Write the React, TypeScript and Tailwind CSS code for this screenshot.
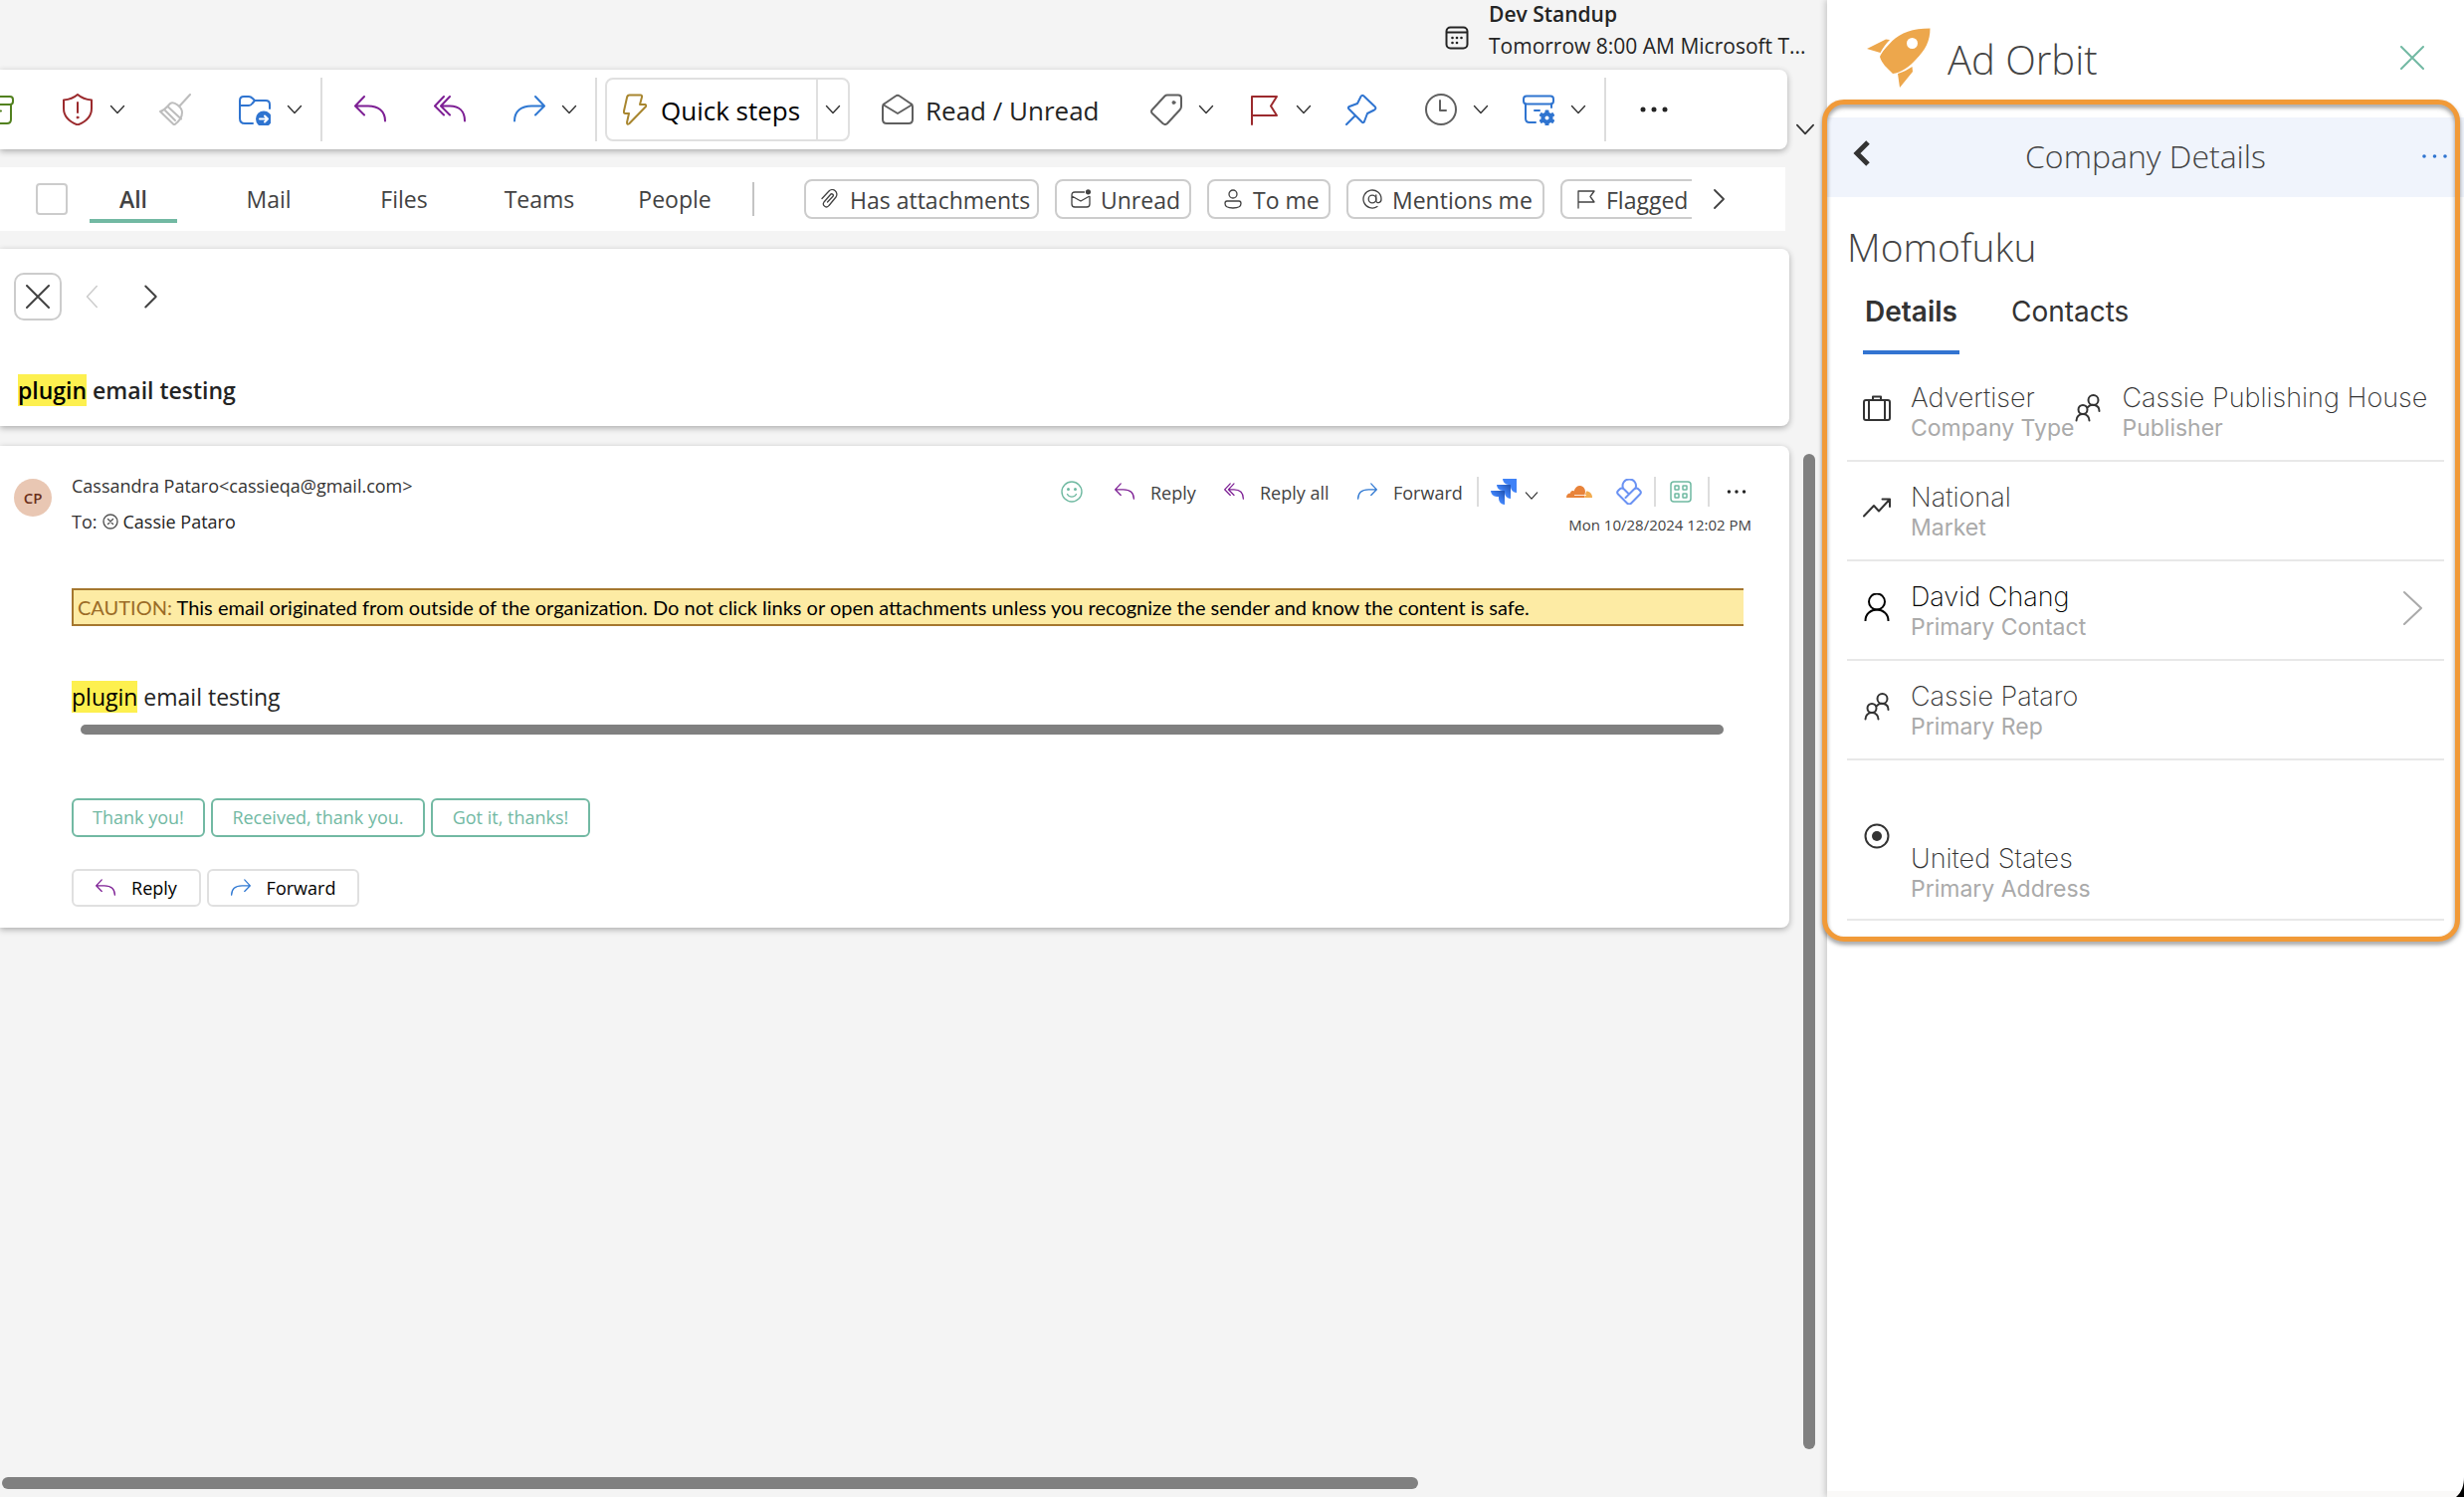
import { useState } from "react";
import type { ReactNode } from "react";
import clsx from "clsx";

type IconProps = { className?: string };

function Stroke({
  className,
  box = "0 0 32 32",
  width = 2,
  children,
}: {
  className?: string;
  box?: string;
  width?: number;
  children: ReactNode;
}) {
  return (
    <svg
      viewBox={box}
      className={clsx("shrink-0", className)}
      fill="none"
      stroke="currentColor"
      strokeWidth={width}
      strokeLinecap="round"
      strokeLinejoin="round"
      aria-hidden="true"
    >
      {children}
    </svg>
  );
}

const ChevronDown = ({ className = "h-4 w-4 text-[#333333]" }: IconProps) => (
  <Stroke className={className} box="0 0 16 16" width={1.4}>
    <path d="M1.500 4.500 8 11.500l6.500-7" />
  </Stroke>
);

const ReplyIcon = ({ className }: IconProps) => (
  <Stroke className={clsx("text-[#7d1f94]", className)}>
    <path d="M10 3 1 12.500l9 9M1.500 12.500H14c10 0 17 5 17 15" />
  </Stroke>
);

const ReplyAllIcon = ({ className }: IconProps) => (
  <Stroke className={clsx("text-[#7d1f94]", className)}>
    <path d="M10 3 1 12.500l9 9M16 3l-9 9.500 9 9M7.500 12.500H16c9 0 15 5 15 15" />
  </Stroke>
);

const ForwardIcon = ({ className }: IconProps) => (
  <Stroke className={clsx("text-[#2f78d2]", className)}>
    <path d="m22 3 9 9.500-9 9M30.500 12.500H18C8 12.500 1 17.500 1 27.500" />
  </Stroke>
);

const ArchiveIcon = () => (
  <Stroke className="h-8 w-8 text-[#52811f]">
    <rect x="1" y="3" width="30" height="8" rx="3" />
    <path d="M3 11v15q0 4 4 4h18q4 0 4-4V11M13 17.500h6" />
  </Stroke>
);

const ShieldIcon = () => (
  <Stroke className="h-8 w-8 text-[#9b2a2d]">
    <path d="M16 1c4 3.500 8.500 5 14 5.500V15c0 8-5 13-14 16.500C7 28 2 23 2 15V6.500C7.500 6 12 4.500 16 1Z" />
    <path d="M16 9v10" />
    <circle cx="16" cy="24" r="1" fill="currentColor" strokeWidth="1" />
  </Stroke>
);

const BroomIcon = () => (
  <Stroke className="h-8 w-8 text-[#bdbdbd]">
    <path d="m31 1-11 12M11 10c4-3 12 4 12 9 0 5-3 9-8 12.500L1 18c4-1 7-4.500 10-8Z" />
    <path d="m9 13.500 13 12M6 17l10 10" />
  </Stroke>
);

const MoveFolderIcon = () => (
  <Stroke className="h-8 w-8 text-[#2f74d0]">
    <path d="M14 30H6q-5 0-5-5V7q0-4 4-4h5q2 0 4 2l2 2h11q4 0 4 4v4M1 12h9q2 0 3.500-2L16 7" />
    <circle cx="25" cy="25.500" r="8" fill="currentColor" stroke="none" />
    <path d="M21 25.500h8m-3-3 3 3-3 3" stroke="#fff" />
  </Stroke>
);

const BoltIcon = () => (
  <Stroke className="h-8 w-6 text-[#a8862f]" box="0 0 24 32">
    <path d="M6.500 1.500h11q2 0 1.500 2L17 11h5.500q1.500 1 0 2.500L6.500 30q-2.500 2-2.500-1l2-9H2.500Q.5 20 1 17.500L4 4q.5-2.500 2.500-2.500Z" />
  </Stroke>
);

const MailReadIcon = () => (
  <Stroke className="h-8 w-8 text-[#5f5f5f]">
    <path d="M1 13q0-2 2-3L14 2.500q2-1.500 4 0L29 10q2 1 2 3v13q0 4-4 4H5q-4 0-4-4Z" />
    <path d="m2 11.500 14 8.500 14-8.500" />
  </Stroke>
);

const TagIcon = () => (
  <Stroke className="h-8 w-8 text-[#5f5f5f]">
    <path d="M17 1.500h11q3 0 3 3V13q0 2-1.500 3.500L17 30q-2 2-4.500 0L2 20q-2-2 0-4L14.500 2.500q1-1 2.500-1Z" />
    <circle cx="23.500" cy="9" r="1.500" fill="currentColor" strokeWidth="1" />
  </Stroke>
);

const FlagIcon = () => (
  <Stroke className="h-8 w-8 text-[#9b2a2d]">
    <path d="M4 31V3h25l-6 9.500 6 9.500H4" />
  </Stroke>
);

const PinIcon = () => (
  <Stroke className="h-8 w-8 text-[#2f74d0]">
    <path d="m1 31 8-8M18.500 2.500 29.500 13q2 2-.5 3.500l-7 3.500-3 8q-1 2-2.500.5L3.500 15.500q-1.500-1.500.5-2.500l8-3L15.500 3q1-2 3-.5Z" />
  </Stroke>
);

const ClockIcon = () => (
  <Stroke className="h-8 w-8 text-[#5f5f5f]">
    <circle cx="16" cy="16" r="15" />
    <path d="M15 7v10h6" />
  </Stroke>
);

const ArchiveGearIcon = () => (
  <Stroke className="h-8 w-8 text-[#2f74d0]">
    <rect x="1" y="2.500" width="30" height="8" rx="3" />
    <path d="M3 10.500V25q0 4 4 4h6M29 10.500V14M12 17h5" />
    <g fill="currentColor" stroke="none">
      <circle cx="24.500" cy="24.500" r="6" />
      <rect x="22.500" y="16.500" width="4" height="16" rx="1" />
      <rect x="22.500" y="16.500" width="4" height="16" rx="1" transform="rotate(60 24.500 24.500)" />
      <rect x="22.500" y="16.500" width="4" height="16" rx="1" transform="rotate(120 24.500 24.500)" />
    </g>
    <circle cx="24.500" cy="24.500" r="2" fill="#fff" stroke="none" />
  </Stroke>
);

const MoreIcon = ({ className }: IconProps) => (
  <svg viewBox="0 0 32 32" className={clsx("shrink-0", className)} fill="currentColor" aria-hidden="true">
    <circle cx="5" cy="16" r="2.500" />
    <circle cx="16" cy="16" r="2.500" />
    <circle cx="27" cy="16" r="2.500" />
  </svg>
);

const ClipIcon = () => (
  <Stroke className="h-5 w-5" box="0 0 20 20" width={1.3}>
    <path d="m2 9.500 6.500-7a4.500 4.500 0 0 1 7.500 5.500l-7 8.500a3 3 0 0 1-5-3.500l6.500-7.500a1.500 1.500 0 0 1 2.500 1.800L7.500 13" />
  </Stroke>
);

const UnreadIcon = () => (
  <Stroke className="h-5 w-5" box="0 0 20 20" width={1.3}>
    <path d="M13.500 3H4Q1 3 1 6v9q0 3 3 3h12q3 0 3-3V7.500M1 7l9 5 8-4.500" />
    <circle cx="17.500" cy="2.800" r="2.600" fill="currentColor" stroke="none" />
  </Stroke>
);

const ToMeIcon = () => (
  <Stroke className="h-5 w-5" box="0 0 20 20" width={1.3}>
    <circle cx="10" cy="5" r="4" />
    <path d="M4 12h12q2 0 2 2.500 0 4.500-8 4.500t-8-4.500Q2 12 4 12Z" />
  </Stroke>
);

const MentionIcon = () => (
  <Stroke className="h-5 w-5" box="0 0 20 20" width={1.3}>
    <circle cx="10" cy="10" r="3.800" />
    <path d="M13.800 6v5.500c0 3 5.200 3 5.200-1.500a9 9 0 1 0-4 7.500" />
  </Stroke>
);

const SmallFlagIcon = () => (
  <Stroke className="h-5 w-5" box="0 0 20 20" width={1.3}>
    <path d="M2 19V2h16l-4 5.500 4 5.500H2" />
  </Stroke>
);

const CalendarIcon = () => (
  <Stroke className="h-6 w-6 text-[#242424]" box="0 0 24 24">
    <rect x="1.500" y="1.500" width="21" height="21" rx="4" />
    <path d="M2 6.500h20" />
    <g fill="currentColor" stroke="none">
      <circle cx="7.500" cy="12" r="1.300" />
      <circle cx="12" cy="12" r="1.300" />
      <circle cx="16.500" cy="12" r="1.300" />
      <circle cx="7.500" cy="17" r="1.300" />
      <circle cx="12" cy="17" r="1.300" />
    </g>
  </Stroke>
);

const SmileyIcon = () => (
  <Stroke className="h-[22px] w-[22px] text-[#6fb9a1]" box="0 0 22 22" width={1.4}>
    <circle cx="11" cy="11" r="10" />
    <path d="M6.500 13.500c2 3.500 7 3.500 9 0" />
    <circle cx="7.500" cy="8.500" r=".8" fill="currentColor" />
    <circle cx="14.500" cy="8.500" r=".8" fill="currentColor" />
  </Stroke>
);

const JiraIcon = () => (
  <svg viewBox="0 0 26 26" className="h-[26px] w-[26px] shrink-0" aria-hidden="true">
    <defs>
      <linearGradient id="jiraFold" x1="1" y1="0" x2="0.3" y2="0.8">
        <stop offset="0.1" stopColor="#2458b8" />
        <stop offset="0.7" stopColor="#3f82f7" />
      </linearGradient>
    </defs>
    <path d="M12 0h14v14a6 6 0 0 1-6-6V6h-2a6 6 0 0 1-6-6Z" fill="#3f82f7" />
    <path d="M6 6h14v14a6 6 0 0 1-6-6v-2h-2a6 6 0 0 1-6-6Z" fill="url(#jiraFold)" />
    <path d="M0 12h14v14a6 6 0 0 1-6-6v-2H6a6 6 0 0 1-6-6Z" fill="url(#jiraFold)" />
  </svg>
);

const CloudIcon = () => (
  <svg viewBox="0 0 26 14" className="h-[14px] w-[26px] shrink-0" aria-hidden="true">
    <path d="M0 13c0-3 1.500-4.500 4-4.500 0-2 2-3 3.500-2C9 2 12 .5 14 1c3 .5 5 3 5 6l-1 6Z" fill="#e8833a" />
    <path d="M18 13 20 6.500c3.500 0 6 2.500 6 6.500Z" fill="#f2ac50" />
    <path d="M8 10.500h12" stroke="#fff" strokeWidth="0.8" />
  </svg>
);

const LoopIcon = () => (
  <Stroke className="h-[26px] w-[26px] text-[#6a92f3]" box="0 0 26 26">
    <path d="M7 9.500A6.700 6.700 0 1 1 19.500 9.500" />
    <path d="M13 15.500 8 10.500a3 3 0 0 0-4.500 0L2 12a2.500 2.500 0 0 0 0 3.500l9 9a3 3 0 0 0 4.200 0l8.800-9a2.500 2.500 0 0 0 0-3.500l-1.500-1.500a3 3 0 0 0-4.500 0l-8.500 8.500" />
  </Stroke>
);

const AppsIcon = () => (
  <Stroke className="h-[22px] w-[22px] text-[#6fb9a1]" box="0 0 22 22" width={1.500}>
    <rect x="1" y="1" width="20" height="20" rx="3" />
    <rect x="5" y="5" width="4" height="4" rx=".5" />
    <rect x="13" y="5" width="4" height="4" rx=".5" />
    <rect x="5" y="13" width="4" height="4" rx=".5" />
    <rect x="13" y="13" width="4" height="4" rx=".5" />
  </Stroke>
);

const BlockedIcon = () => (
  <Stroke className="h-4 w-4 text-[#555555]" box="0 0 16 16" width={1.400}>
    <circle cx="8" cy="8" r="7" />
    <path d="m5.500 5.500 5 5m0-5-5 5" />
  </Stroke>
);

const CloseIcon = ({ className }: IconProps) => (
  <Stroke className={className} box="0 0 24 24">
    <path d="m1 1 22 22M23 1 1 23" />
  </Stroke>
);

const RocketIcon = () => (
  <svg viewBox="0 0 64 60" className="h-[60px] w-16 shrink-0" fill="#eda74c" aria-hidden="true">
    <path
      fillRule="evenodd"
      d="M63.500.5C46 .5 34 5 25.500 13 19 20 15 24 13 29c2 7 7 11 13 17 8-1 17-7 23-14C59 22 63.500 13 63.500.5ZM45.500 10a5.500 5.500 0 1 1 0 11 5.500 5.500 0 0 1 0-11Z"
    />
    <path d="M0 21 19 11.500l4 .5c-4 4-7 8-9.500 13Z" />
    <path d="M31 46c6-2 10-4 14.500-7l.5 5-13 16Z" />
  </svg>
);

const SuitcaseIcon = () => (
  <Stroke className="h-7 w-7" box="0 0 28 28">
    <rect x="1" y="6" width="26" height="20" rx="2" />
    <path d="M6 6v20M22 6v20M10 6V2.500h8V6" />
  </Stroke>
);

const TrendIcon = () => (
  <Stroke className="h-7 w-7" box="0 0 28 28">
    <path d="M1 22.500 11 12l5 5.500L27 5.500M19.500 5.500H27V13" />
  </Stroke>
);

const PersonIcon = () => (
  <Stroke className="h-7 w-7 text-black" box="0 0 28 28">
    <circle cx="14" cy="8.500" r="8" />
    <path d="M2.500 27.500C2.500 21 8 16.500 14 16.500S25.500 21 25.500 27.500" />
  </Stroke>
);

const PeopleIcon = () => (
  <Stroke className="h-7 w-7" box="0 0 28 28">
    <circle cx="19.500" cy="6" r="5" />
    <circle cx="9" cy="15.500" r="4.500" />
    <path d="M2.500 26.500c0-4 3-6.500 6.500-6.500s6.500 2.500 6.500 6.500M14 13c3-3.500 11.500-3 11.500 4" />
  </Stroke>
);

const TargetIcon = () => (
  <Stroke className="h-7 w-7" box="0 0 28 28">
    <circle cx="14" cy="14" r="11.500" />
    <circle cx="14" cy="14" r="5" fill="currentColor" stroke="none" />
  </Stroke>
);

function Tool({ label, menu, className, children }: { label: string; menu?: boolean; className: string; children: ReactNode }) {
  return (
    <button type="button" aria-label={label} className={clsx("flex shrink-0 items-center gap-4", className)}>
      {children}
      {menu && <ChevronDown />}
    </button>
  );
}

const Rule = ({ className }: IconProps) => <span className={clsx("w-0.5 shrink-0", className)} />;

function Toolbar() {
  return (
    <div className="flex items-end">
      <div className="flex h-20 min-w-0 flex-1 items-center rounded-r-lg bg-white shadow-[0_2px_6px_rgba(0,0,0,0.3)]">
        <Tool label="Archive" className="-ml-[18px]"><ArchiveIcon /></Tool>
        <Tool label="Report" menu className="ml-12"><ShieldIcon /></Tool>
        <Tool label="Sweep" className="ml-[34px]"><BroomIcon /></Tool>
        <Tool label="Move to" menu className="ml-12"><MoveFolderIcon /></Tool>
        <Rule className="ml-[18px] h-16 bg-[#dddddd]" />
        <Tool label="Reply" className="ml-8"><ReplyIcon className="h-8 w-8" /></Tool>
        <Tool label="Reply all" className="ml-12"><ReplyAllIcon className="h-8 w-8" /></Tool>
        <Tool label="Forward" menu className="ml-12"><ForwardIcon className="h-8 w-8" /></Tool>
        <Rule className="ml-[18px] h-16 bg-[#dddddd]" />
        <div className="ml-2 flex h-16 w-[246px] shrink-0 rounded-lg border-2 border-[#e0e0e0] text-black">
          <button type="button" className="flex flex-1 items-center gap-3.5 pl-4 text-[26px] leading-9 whitespace-nowrap">
            <BoltIcon />
            <span className="pt-0.5">Quick steps</span>
          </button>
          <button type="button" aria-label="Quick steps menu" className="flex w-8 items-center justify-center border-l-2 border-[#e0e0e0]">
            <ChevronDown />
          </button>
        </div>
        <button type="button" className="ml-8 flex w-[222px] shrink-0 items-center gap-3 text-[26px] leading-9 whitespace-nowrap text-[#242424]">
          <MailReadIcon />
          <span className="pt-0.5">Read / Unread</span>
        </button>
        <Tool label="Categorize" menu className="ml-12"><TagIcon /></Tool>
        <Tool label="Flag" menu className="ml-[34px]"><FlagIcon /></Tool>
        <Tool label="Pin" className="ml-[34px]"><PinIcon /></Tool>
        <Tool label="Snooze" menu className="ml-12"><ClockIcon /></Tool>
        <Tool label="Policy" menu className="ml-[34px]"><ArchiveGearIcon /></Tool>
        <Rule className="ml-[18px] h-16 bg-[#dddddd]" />
        <Tool label="More options" className="ml-8"><MoreIcon className="h-8 w-8 text-[#242424]" /></Tool>
      </div>
      <button type="button" aria-label="Ribbon options" className="flex w-10 shrink-0 pt-2 pb-2.5 pl-2">
        <ChevronDown className="h-5 w-5 text-[#333333]" />
      </button>
    </div>
  );
}

const TABS = ["All", "Mail", "Files", "Teams", "People"];

const PILLS = [
  { text: "Has attachments", icon: <ClipIcon />, width: "w-[236px]" },
  { text: "Unread", icon: <UnreadIcon />, width: "w-[137px]" },
  { text: "To me", icon: <ToMeIcon />, width: "w-[124px]" },
  { text: "Mentions me", icon: <MentionIcon />, width: "w-[199px]" },
  { text: "Flagged", icon: <SmallFlagIcon />, width: "w-[150px]" },
];

function FilterBar() {
  const [tab, setTab] = useState("All");

  return (
    <div className="mt-[18px] mr-[42px] flex h-16 items-center bg-white text-[23px] leading-8 text-[#424242]">
      <input
        type="checkbox"
        aria-label="Select all"
        className="ml-9 h-8 w-8 shrink-0 appearance-none rounded-sm border-2 border-[#cccccc] bg-white"
      />
      <div className="ml-[22px] flex shrink-0 gap-12">
        {TABS.map((t) => (
          <button
            key={t}
            type="button"
            onClick={() => setTab(t)}
            className={clsx(
              "flex h-12 w-[88px] items-center justify-center border-b-4 pt-1",
              t === tab ? "border-[#72b9a3] font-semibold" : "border-transparent",
            )}
          >
            {t}
          </button>
        ))}
      </div>
      <Rule className="ml-[34px] h-[34px] bg-[#c4c4c4]" />
      <div className="ml-[50px] flex w-[892px] gap-4 overflow-hidden">
        {PILLS.map((p) => (
          <button
            key={p.text}
            type="button"
            className={clsx(
              "flex h-10 shrink-0 items-center gap-2.5 rounded-lg border-2 border-[#cccccc] pl-3.5 whitespace-nowrap",
              p.width,
            )}
          >
            {p.icon}
            <span className="pt-0.5">{p.text}</span>
          </button>
        ))}
      </div>
      <button type="button" aria-label="More filters" className="ml-[18px] shrink-0">
        <Stroke className="h-5 w-5" box="0 0 20 20" width={1.800}>
          <path d="m5 1 9 9-9 9" />
        </Stroke>
      </button>
    </div>
  );
}

function SubjectCard() {
  return (
    <div className="mt-[18px] mr-[38px] h-[178px] rounded-r-lg bg-white pt-6 shadow-[0_2px_6px_rgba(0,0,0,0.3)]">
      <div className="flex items-center pl-3.5 text-[#424242]">
        <button type="button" aria-label="Close" className="flex h-12 w-12 items-center justify-center rounded-[10px] border-2 border-[#cccccc]">
          <CloseIcon className="h-6 w-6" />
        </button>
        <button type="button" aria-label="Previous" className="ml-[18px] text-[#cccccc]">
          <Stroke className="h-6 w-6">
            <path d="M23 2 10 16l13 14" />
          </Stroke>
        </button>
        <button type="button" aria-label="Next" className="ml-[34px]">
          <Stroke className="h-6 w-6" width={2.600}>
            <path d="m11 2 14 14-14 14" />
          </Stroke>
        </button>
      </div>
      <h1 className="mt-[54px] pl-[18px] text-[23px] leading-8 font-semibold text-[#242424]">
        <mark className="inline-block bg-[#fdf04f] text-black">plugin</mark> email testing
      </h1>
    </div>
  );
}

function MessageActions() {
  return (
    <div className="flex items-center text-[18px] leading-8 text-[#424242]">
      <button type="button" aria-label="React"><SmileyIcon /></button>
      <button type="button" className="ml-8 flex w-[84px] items-center gap-4">
        <ReplyIcon className="h-5 w-5" />
        <span className="pt-0.5">Reply</span>
      </button>
      <button type="button" className="ml-[26px] flex w-[108px] items-center gap-4 whitespace-nowrap">
        <ReplyAllIcon className="h-5 w-5" />
        <span className="pt-0.5">Reply all</span>
      </button>
      <button type="button" className="ml-[26px] flex w-[108px] items-center gap-4">
        <ForwardIcon className="h-5 w-5" />
        <span className="pt-0.5">Forward</span>
      </button>
      <Rule className="ml-3 h-[30px] bg-[#dddddd]" />
      <button type="button" aria-label="Jira" className="ml-3 flex items-center gap-2">
        <JiraIcon />
        <ChevronDown className="mt-2 h-3.5 w-3.5 text-[#333333]" />
      </button>
      <button type="button" aria-label="Cloudflare" className="ml-7"><CloudIcon /></button>
      <button type="button" aria-label="Loop" className="ml-6"><LoopIcon /></button>
      <Rule className="ml-3 h-[30px] bg-[#dddddd]" />
      <button type="button" aria-label="Apps" className="ml-3.5"><AppsIcon /></button>
      <Rule className="ml-4 h-[30px] bg-[#dddddd]" />
      <button type="button" aria-label="More actions" className="mr-1 ml-4"><MoreIcon className="h-[22px] w-[22px] text-[#242424]" /></button>
    </div>
  );
}

function MessageCard() {
  return (
    <article className="h-[484px] min-w-0 flex-1 rounded-r-lg bg-white shadow-[0_2px_6px_rgba(0,0,0,0.3)]">
      <div className="flex pt-6 pr-[38px] pl-3.5">
        <span className="mt-[9px] flex h-[38px] w-[38px] items-center justify-center rounded-full bg-[#e9c7b3] text-[15px] font-semibold text-[#6b2f1a]">
          CP
        </span>
        <div className="ml-5 text-[18px] leading-8 text-[#333333]">
          <p>Cassandra Pataro&lt;cassieqa@gmail.com&gt;</p>
          <p className="mt-1 flex items-center">
            To:
            <span className="ml-1.5 flex items-center gap-1 text-[#242424]">
              <BlockedIcon />
              Cassie Pataro
            </span>
          </p>
        </div>
        <div className="ml-auto flex flex-col items-end pt-[5px]">
          <MessageActions />
          <time className="text-[15px] leading-8 text-[#424242]">Mon 10/28/2024 12:02 PM</time>
        </div>
      </div>

      <div className="mt-12 mr-[46px] ml-[72px]">
        <p className="h-[38px] border-2 border-r-0 border-[#a5772f] bg-[#fdeba4] pl-1 font-['Lato',sans-serif] text-[20px] leading-[34px] whitespace-nowrap text-black">
          <span className="text-[#9b6b26]">CAUTION:</span> This email originated from outside of the organization. Do not click
          links or open attachments unless you recognize the sender and know the content is safe.
        </p>
        <p className="mt-[55px] text-[23px] leading-8 text-[#242424]">
          <mark className="inline-block bg-[#fdf04f] text-black">plugin</mark> email testing
        </p>
        <div className="mt-3 mr-5 ml-[9px] h-2.5 rounded-full bg-[#808080]" />
      </div>

      <div className="mt-16 ml-[72px] flex gap-1.5 text-[18px] text-[#72b9a3]">
        <button type="button" className="h-[39px] w-[134px] rounded-md border-2 border-[#72b9a3] whitespace-nowrap">Thank you!</button>
        <button type="button" className="h-[39px] w-[215px] rounded-md border-2 border-[#72b9a3] whitespace-nowrap">Received, thank you.</button>
        <button type="button" className="h-[39px] w-[160px] rounded-md border-2 border-[#72b9a3] whitespace-nowrap">Got it, thanks!</button>
      </div>
      <div className="mt-8 ml-[72px] flex gap-1.5 text-[18px] text-black">
        <button type="button" className="flex h-[38px] w-[130px] items-center justify-center gap-4 rounded-md border-2 border-[#e0e0e0]">
          <ReplyIcon className="h-5 w-5" />
          Reply
        </button>
        <button type="button" className="flex h-[38px] w-[153px] items-center justify-center gap-4 rounded-md border-2 border-[#e0e0e0]">
          <ForwardIcon className="h-5 w-5" />
          Forward
        </button>
      </div>
    </article>
  );
}

function Detail({ icon, value, label, dark }: { icon: ReactNode; value: string; label: string; dark?: boolean }) {
  return (
    <div className="flex min-w-0 items-center">
      {icon}
      <div className="ml-5 min-w-0 pt-2">
        <p className={clsx("overflow-hidden text-[27px] leading-8 font-extralight whitespace-nowrap", dark && "text-black")}>{value}</p>
        <p className="text-[23px] leading-7 whitespace-nowrap text-[#aaaaaa]">{label}</p>
      </div>
    </div>
  );
}

function CompanyPanel() {
  const [tab, setTab] = useState("Details");

  return (
    <aside className="relative flex w-[640px] shrink-0 flex-col bg-white shadow-[-2px_0_6px_rgba(0,0,0,0.18)]">
      <header className="flex h-[100px] items-center pt-4 pr-10 pl-10">
        <RocketIcon />
        <h2 className="ml-[17px] flex-1 pt-1 text-[40px] leading-[60px] font-light text-[#444444]">Ad Orbit</h2>
        <button type="button" aria-label="Close panel">
          <CloseIcon className="h-6 w-6 text-[#72b9a3]" />
        </button>
      </header>

      <section className="relative pt-[18px] pb-[21px] text-[#333333]">
        <div className="flex h-20 items-center bg-[#f0f4fc] pr-4 pb-0.5 pl-[26px]">
          <button type="button" aria-label="Back" className="pb-1.5">
            <Stroke className="h-7 w-[18px]" box="0 0 18 28" width={5}>
              <path d="M15 3 4 14l11 11" strokeLinecap="butt" strokeLinejoin="miter" />
            </Stroke>
          </button>
          <h3 className="flex-1 text-center text-[32px] leading-10 font-light text-[#444444]">Company Details</h3>
          <button type="button" aria-label="Company actions" className="text-[#2f74d0]">
            <svg viewBox="0 0 28 28" className="h-7 w-7" fill="currentColor" aria-hidden="true">
              <circle cx="4" cy="14" r="1.800" />
              <circle cx="14.500" cy="14" r="1.800" />
              <circle cx="25" cy="14" r="1.800" />
            </svg>
          </button>
        </div>

        <h4 className="mt-5 ml-5 text-[39px] leading-[60px] font-light text-[#444444]">Momofuku</h4>

        <div className="font-['Inter',sans-serif]">
          <div className="ml-9 flex gap-[50px] text-[28px]">
            {["Details", "Contacts"].map((t) => (
              <button
                key={t}
                type="button"
                onClick={() => setTab(t)}
                className={clsx(
                  "flex h-[78px] items-center border-b-4 px-0.5 pb-1",
                  t === tab ? "border-[#3374d1] font-semibold" : "border-transparent",
                )}
              >
                {t}
              </button>
            ))}
          </div>

          <div className="mt-2 mr-5 ml-5">
            <div className="flex h-[100px] items-center border-b-2 border-[#e8e8e8] pr-4 pb-1.5 pl-4">
              <Detail icon={<SuitcaseIcon />} value="Advertiser" label="Company Type" />
              <Detail icon={<PeopleIcon />} value="Cassie Publishing House" label="Publisher" />
            </div>
            <div className="flex h-[100px] items-center border-b-2 border-[#e8e8e8] pb-1.5 pl-4">
              <Detail icon={<TrendIcon />} value="National" label="Market" />
            </div>
            <a href="#david-chang" className="flex h-[100px] items-center justify-between border-b-2 border-[#e8e8e8] pr-[21px] pb-1.5 pl-4">
              <Detail icon={<PersonIcon />} value="David Chang" label="Primary Contact" dark />
              <Stroke className="h-9 w-5 text-[#aaaaaa]" box="0 0 20 36">
                <path d="m1 3 17 16L1 35" />
              </Stroke>
            </a>
            <div className="flex h-[100px] items-center border-b-2 border-[#e8e8e8] pb-1.5 pl-4">
              <Detail icon={<PeopleIcon />} value="Cassie Pataro" label="Primary Rep" />
            </div>
            <div className="flex h-[161px] items-start border-b-2 border-[#e8e8e8] pt-[62px] pl-4">
              <TargetIcon />
              <div className="ml-5 pt-[21px]">
                <p className="text-[27px] leading-8 font-extralight">United States</p>
                <p className="text-[23px] leading-7 text-[#aaaaaa]">Primary Address</p>
              </div>
            </div>
          </div>
        </div>

        <div className="pointer-events-none absolute inset-y-0 right-1 -left-[5px] rounded-[22px] border-[5px] border-[#f19a38] drop-shadow-[0_3px_2px_rgba(0,0,0,0.4)]" />
      </section>

      <div className="mt-auto h-1.5 bg-[#faf9f8]" />
      <svg viewBox="0 0 20 20" className="absolute right-0 bottom-0 h-5 w-5" aria-hidden="true">
        <path d="M20 0C20 8 18 15 12 20h8Z" fill="#000" />
      </svg>
    </aside>
  );
}

export default function App() {
  return (
    <div className="flex min-h-screen overflow-hidden bg-[#f4f4f4] font-['Open_Sans','Noto_Sans',sans-serif]">
      <main className="flex min-w-0 flex-1 flex-col">
        <div className="flex h-[70px] items-start justify-end pr-6 text-[21px] leading-8 text-[#242424]">
          <div className="flex w-[360px] gap-5">
            <div className="pt-[26px]">
              <CalendarIcon />
            </div>
            <div className="-mt-0.5 min-w-0 flex-1 whitespace-nowrap">
              <p className="font-semibold">Dev Standup</p>
              <p>Tomorrow 8:00 AM Microsoft T...</p>
            </div>
          </div>
        </div>
        <Toolbar />
        <FilterBar />
        <SubjectCard />
        <div className="mt-5 flex flex-1">
          <MessageCard />
          <div className="flex w-[38px] shrink-0 pt-2 pl-3.5">
            <div className="w-3 rounded-full bg-[#808080]" />
          </div>
        </div>
        <div className="mt-7 mb-2 ml-0.5 h-3 w-[77.500%] rounded-full bg-[#808080]" />
      </main>
      <CompanyPanel />
    </div>
  );
}
